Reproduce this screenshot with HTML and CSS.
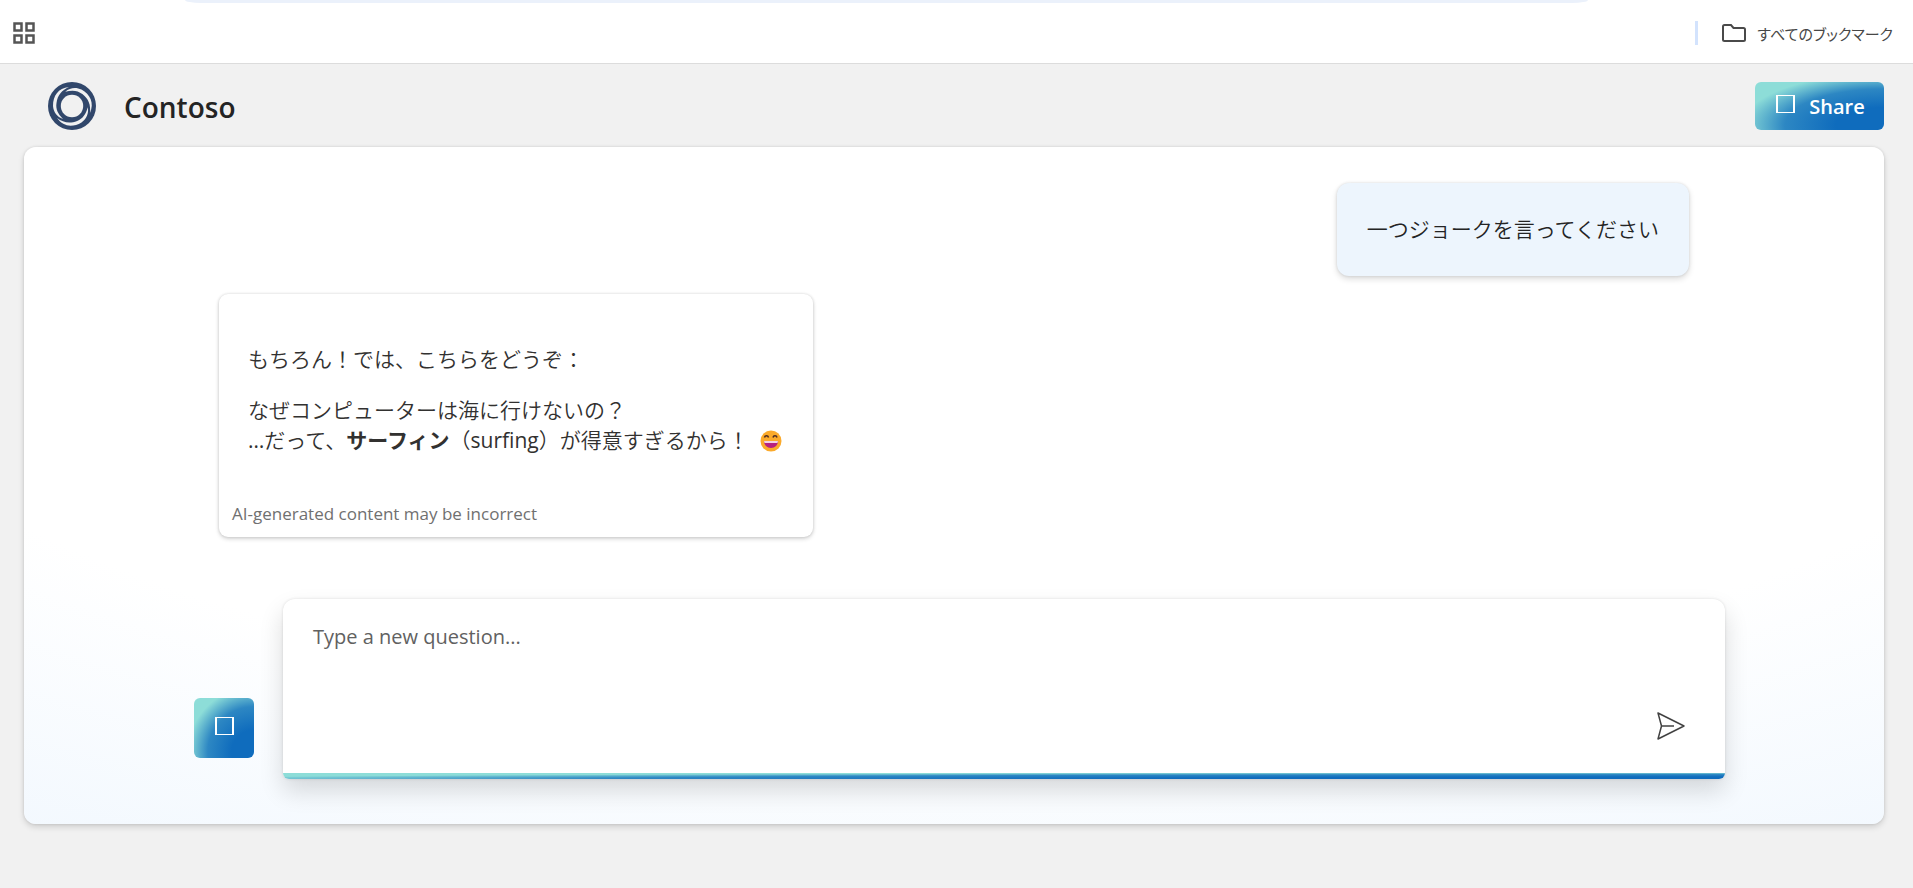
FILE: index.html
```html
<!DOCTYPE html>
<html lang="ja">
<head>
<meta charset="utf-8">
<title>Contoso</title>
<link rel="stylesheet" href="styles.css">
</head>
<body>
<div class="bookmarks">
  <div class="address-edge"></div>
  <button class="apps" aria-label="Apps">
    <svg width="22" height="22" viewBox="0 0 22 22" fill="none" stroke="#555" stroke-width="2.500"><path d="M1.500 1.500h7v7h-7zM13.500 1.500h7v7h-7zM1.500 13.500h7v7h-7zM13.500 13.500h7v7h-7z"/></svg>
  </button>
  <button class="all-bookmarks">
    <svg width="24" height="18" viewBox="0 0 24 18" fill="none" stroke="#4a4a4a" stroke-width="2"><path d="M2.500 1H9l2.500 3H21.500a1.500 1.500 0 0 1 1.500 1.500v10a1.500 1.500 0 0 1-1.500 1.500h-19A1.500 1.500 0 0 1 1 15.500v-13A1.500 1.500 0 0 1 2.500 1z"/></svg>
    <span>すべてのブックマーク</span>
  </button>
</div>
<header class="header">
  <a class="brand" href="#">
    <svg width="48" height="48" viewBox="0 0 48 48">
      <defs><path id="blade" d="M21 5C10 6 5 14 5 24C5.500 30 9 35 15 37C10 32 7.500 27 8.500 21C9.500 13 14 8 21 5Z"/></defs>
      <circle cx="24" cy="24" r="24" fill="#31476b"/>
      <g fill="#f1f1f1">
        <circle cx="24" cy="24" r="11.200"/>
        <use href="#blade"/>
        <use href="#blade" transform="rotate(120 24 24)"/>
        <use href="#blade" transform="rotate(240 24 24)"/>
      </g>
    </svg>
    <span>Contoso</span>
  </a>
  <button class="share"><span class="glyph"></span>Share</button>
</header>
<main class="chat">
  <section class="messages">
    <div class="question">一つジョークを言ってください</div>
    <article class="answer">
      <div class="answer-text">
        <p>もちろん！では、こちらをどうぞ：</p>
        <p>なぜコンピューターは海に行けないの？<br><span class="latin">…</span>だって、<strong>サーフィン</strong>（<span class="latin">surfing</span>）が得意すぎるから！ <svg class="emoji" role="img" aria-label="😄" width="22" height="22" viewBox="0 0 22 22"><circle cx="11" cy="11" r="10.500" fill="#fbaa2b"/><path d="M4.500 7.500c.5-2.500 3.500-2.500 4 0M13 7.500c.5-2.500 3.500-2.500 4 0" fill="none" stroke="#4b2b25" stroke-width="1.500"/><path d="M4 11h14c0 4-3 7-7 7s-7-3-7-7z" fill="#b8207f"/><path d="M4 11h14l-.5 2h-13z" fill="#f3d3e6"/></svg></p>
      </div>
      <footer class="disclaimer">AI-generated content may be incorrect</footer>
    </article>
  </section>
  <form class="composer">
    <button class="clear" type="button" aria-label="Clear chat"><span class="glyph"></span></button>
    <div class="input-box">
      <textarea aria-label="Question" placeholder="Type a new question..."></textarea>
      <button class="send" type="button" aria-label="Send">
        <svg width="30" height="30" viewBox="0 0 30 30" fill="none" stroke="#424242" stroke-width="1.500" stroke-linejoin="round"><path d="M2 2l26 13L2 28l3.500-13zM5.500 15H18"/></svg>
      </button>
    </div>
  </form>
</main>
</body>
</html>
```
FILE: styles.css
```css
* { box-sizing: border-box; }

body {
  margin: 0;
  min-height: 100vh;
  display: flex;
  flex-direction: column;
  background: #f1f1f1;
  color: #242424;
  font-family: "Open Sans", "Noto Sans CJK JP", sans-serif;
}

button {
  border: 0;
  padding: 0;
  background: none;
  color: inherit;
  font: inherit;
}

.bookmarks {
  position: relative;
  display: flex;
  align-items: center;
  justify-content: space-between;
  height: 64px;
  padding: 3px 20px 0 13px;
  background: #fff;
  border-bottom: 1px solid #dcdcdc;
}

.address-edge {
  position: absolute;
  top: 0;
  left: 185px;
  right: 325px;
  height: 3px;
  border-radius: 0 0 16px 16px / 0 0 3px 3px;
  background: #ebf1fb;
}

.apps { display: flex; }

.all-bookmarks {
  display: flex;
  align-items: center;
  gap: 11px;
  height: 24px;
  padding-left: 24px;
  border-left: 3px solid #d3e3fd;
  color: #474747;
  font-size: 15px;
  font-family: "Noto Sans CJK JP", sans-serif;
  font-feature-settings: "palt";
}

.header {
  display: flex;
  align-items: center;
  justify-content: space-between;
  height: 83px;
  padding: 1px 29px 0 48px;
}

.brand {
  display: flex;
  align-items: center;
  gap: 28px;
  color: #242424;
  font-size: 28px;
  font-weight: 600;
  text-decoration: none;
}

.brand span { padding-top: 2px; }

.share, .clear {
  display: flex;
  align-items: center;
  justify-content: center;
  border-radius: 6px;
  background: radial-gradient(110% 108% at 100% 90%, #0f6cbd 34%, #2d87c3 70%, #8dddd8 100%);
}

.share {
  gap: 14px;
  width: 129px;
  height: 48px;
  padding-left: 2px;
  color: #fff;
  font-size: 20px;
  font-weight: 600;
}

.glyph {
  width: 19px;
  height: 18px;
  margin-bottom: 4px;
  border: 1px solid #fff;
  border-width: 1px 2px;
}

.chat {
  display: flex;
  flex-direction: column;
  flex: 1;
  margin: 0 29px 64px 24px;
  border-radius: 12px;
  background: radial-gradient(108% 108% at 50% 20%, #fff 57%, #eef6fe 100%);
  box-shadow: 0 3px 6px rgba(0, 0, 0, .14), 0 0 3px rgba(0, 0, 0, .12);
}

.messages {
  display: flex;
  flex: 1;
  flex-direction: column;
  gap: 18px;
  padding: 36px 195px 0;
}

.question {
  align-self: flex-end;
  padding: 30px;
  border-radius: 12px;
  background: #edf5fd;
  box-shadow: 0 3px 6px rgba(0, 0, 0, .14), 0 0 3px rgba(0, 0, 0, .12);
  font-size: 21px;
  font-weight: 350;
  line-height: 33px;
}

.answer {
  align-self: flex-start;
  border-radius: 9px;
  background: #fff;
  box-shadow: 0 2px 4px rgba(0, 0, 0, .16), 0 0 3px rgba(0, 0, 0, .14);
}

.answer-text {
  padding: 50px 31px 44px 29px;
  color: #323130;
  font-size: 21px;
  font-weight: 350;
  line-height: 30px;
}

.answer-text p { margin: 0; }
.answer-text p + p { margin-top: 21px; }
.answer-text strong { font-weight: 700; }
.latin { font-weight: 400; }

.emoji {
  vertical-align: -4px;
  margin-left: 6px;
}

.disclaimer {
  padding: 0 13px 8px;
  color: #707070;
  font-size: 17px;
  line-height: 30px;
}

.composer {
  display: flex;
  align-items: flex-end;
  gap: 29px;
  padding: 0 159px 45px 170px;
}

.clear {
  width: 60px;
  height: 60px;
  margin-bottom: 21px;
}

.input-box {
  position: relative;
  display: flex;
  flex: 1;
  height: 180px;
  overflow: hidden;
  border-radius: 12px 12px 6px 6px;
  background: #fff;
  box-shadow: 0 12px 24px rgba(0, 0, 0, .14), 0 0 3px rgba(0, 0, 0, .12);
}

.input-box::after {
  content: "";
  position: absolute;
  inset: auto 0 0;
  height: 6px;
  background: radial-gradient(107% 107% at 98% 100%, #0f6cbd 34%, #2d87c3 70%, #8dddd8 100%);
}

textarea {
  flex: 1;
  padding: 23px 30px;
  border: 0;
  outline: 0;
  resize: none;
  background: none;
  color: #242424;
  font: 20px/30px "Open Sans", "Noto Sans CJK JP", sans-serif;
}

textarea::placeholder { color: #616161; opacity: 1; }

.send {
  align-self: flex-end;
  display: flex;
  margin: 0 39px 38px 0;
}
```
